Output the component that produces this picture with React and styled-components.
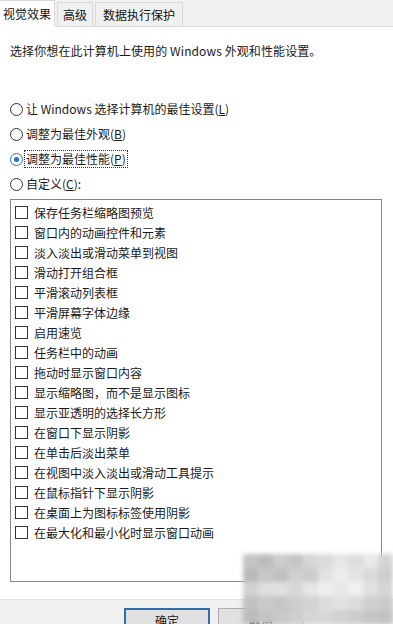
import styled, { createGlobalStyle } from 'styled-components'

const GlobalStyle = createGlobalStyle`
  html, body {
    margin: 0;
    padding: 0;
    background: #ffffff;
  }
  body {
    font-family: "Noto Sans CJK SC", "Noto Sans", "Liberation Sans", sans-serif;
    font-size: 12px;
    color: #1a1a1a;
  }
`

const Window = styled.div`
  position: relative;
  width: 393px;
  height: 624px;
  overflow: hidden;
  display: flex;
  flex-direction: column;
  background: #ffffff;
`

const TabStrip = styled.div`
  height: 27px;
  display: flex;
  align-items: flex-end;
  background: #f0f0f0;
  border-bottom: 1px solid #d9d9d9;
`

const Tab = styled.div`
  height: ${p => (p.active ? '27px' : '24px')};
  margin-bottom: ${p => (p.active ? '-1px' : '0')};
  margin-left: ${p => (p.active ? '0' : '2px')};
  padding: 0 ${p => p.pad || 6}px;
  display: flex;
  align-items: center;
  box-sizing: border-box;
  background: ${p => (p.active ? '#ffffff' : '#f0f0f0')};
  border: 1px solid #d9d9d9;
  border-bottom: ${p => (p.active ? '1px solid #ffffff' : 'none')};
  border-left: ${p => (p.active ? 'none' : '1px solid #d9d9d9')};
  font-size: 12px;
  line-height: 16px;
  color: #111;
`

const Page = styled.div`
  flex: 1;
  display: flex;
  flex-direction: column;
  padding: 0 11px 0 10px;
  background: #ffffff;
`

const Desc = styled.div`
  margin-top: 16px;
  line-height: 16px;
  font-size: 12px;
  letter-spacing: 0.1px;
`

const RadioGroup = styled.div`
  margin-top: 42px;
  display: flex;
  flex-direction: column;
  gap: 9px;
`

const RadioRow = styled.label`
  display: flex;
  align-items: center;
  height: 16px;
  gap: 2px;
`

const RadioCircle = styled.span`
  width: 11px;
  height: 11px;
  border-radius: 50%;
  border: 1px solid ${p => (p.checked ? '#1e73c8' : '#333')};
  background: #fff;
  display: flex;
  align-items: center;
  justify-content: center;
  flex-shrink: 0;
  &::after {
    content: '';
    width: 5px;
    height: 5px;
    border-radius: 50%;
    background: ${p => (p.checked ? '#1e73c8' : 'transparent')};
  }
`

const RadioText = styled.span`
  line-height: 16px;
  padding: 0 1px;
  outline: ${p => (p.focus ? '1px dotted #333' : 'none')};
`

const Key = styled.span`
  text-decoration: underline;
  text-underline-offset: 1px;
`

const ListBox = styled.div`
  margin-top: 7px;
  height: 383px;
  box-sizing: border-box;
  border: 1px solid #828790;
  padding: 2px 0 0 4px;
  display: flex;
  flex-direction: column;
`

const CheckRow = styled.label`
  height: 20px;
  display: flex;
  align-items: center;
  gap: 6px;
`

const CheckBox = styled.span`
  width: 11px;
  height: 11px;
  border: 1px solid #333;
  background: #fff;
  flex-shrink: 0;
`

const Footer = styled.div`
  margin-top: 17px;
  height: 22px;
  background: #f0f0f0;
  border-top: 1px solid #e3e3e3;
  display: flex;
  align-items: flex-start;
  padding: 8px 0 0 124px;
  gap: 8px;
`

const Button = styled.div`
  width: 86px;
  height: 24px;
  box-sizing: border-box;
  border: ${p => (p.primary ? '2px solid #2f6fa6' : '1px solid #adadad')};
  background: #e1e1e1;
  display: flex;
  justify-content: center;
  padding-top: 3px;
  font-size: 12px;
  line-height: 16px;
`

const Watermark = styled.div`
  position: absolute;
  right: 0;
  bottom: 0;
  width: 150px;
  height: 70px;
  display: grid;
  grid-template-columns: repeat(10, 1fr);
  grid-template-rows: repeat(5, 1fr);
  filter: blur(2px);
`

const Pixel = styled.span`
  display: block;
`

const shades = [
  '#c4c4c4', '#bdbdbd', '#cdcdcd', '#c6c6c6', '#d6d6d6', '#dcdcdc', '#e6e6e6', '#dedede', '#e9e9e9', '#d4d4d4',
  '#bababa', '#c8c8c8', '#c0c0c0', '#d0d0d0', '#cccccc', '#e2e2e2', '#ececec', '#e4e4e4', '#dadada', '#cfcfcf',
  '#d2d2d2', '#dedede', '#e0e0e0', '#d8d8d8', '#e6e6e6', '#eeeeee', '#e8e8e8', '#f0f0f0', '#e0e0e0', '#d6d6d6',
  '#c2c2c2', '#cacaca', '#c6c6c6', '#cdcdcd', '#d4d4d4', '#dcdcdc', '#e2e2e2', '#dcdcdc', '#d0d0d0', '#cbcbcb',
  '#bcbcbc', '#c4c4c4', '#c9c9c9', '#cfcfcf', '#d6d6d6', '#d8d8d8', '#d2d2d2', '#cccccc', '#c6c6c6', '#c2c2c2',
]

const options = [
  ['让 Windows 选择计算机的最佳设置(', 'L', ')'],
  ['调整为最佳外观(', 'B', ')'],
  ['调整为最佳性能(', 'P', ')'],
  ['自定义(', 'C', '):'],
]

const effects = [
  '保存任务栏缩略图预览',
  '窗口内的动画控件和元素',
  '淡入淡出或滑动菜单到视图',
  '滑动打开组合框',
  '平滑滚动列表框',
  '平滑屏幕字体边缘',
  '启用速览',
  '任务栏中的动画',
  '拖动时显示窗口内容',
  '显示缩略图，而不是显示图标',
  '显示亚透明的选择长方形',
  '在窗口下显示阴影',
  '在单击后淡出菜单',
  '在视图中淡入淡出或滑动工具提示',
  '在鼠标指针下显示阴影',
  '在桌面上为图标标签使用阴影',
  '在最大化和最小化时显示窗口动画',
]

export default function App() {
  return (
    <>
      <GlobalStyle />
      <Window>
        <TabStrip>
          <Tab active pad={3}>视觉效果</Tab>
          <Tab pad={5}>高级</Tab>
          <Tab pad={7}>数据执行保护</Tab>
        </TabStrip>
        <Page>
          <Desc>选择你想在此计算机上使用的 Windows 外观和性能设置。</Desc>
          <RadioGroup>
            {options.map(([a, k, b], i) => (
              <RadioRow key={a}>
                <RadioCircle checked={i === 2} />
                <RadioText focus={i === 2}>
                  {a}<Key>{k}</Key>{b}
                </RadioText>
              </RadioRow>
            ))}
          </RadioGroup>
          <ListBox>
            {effects.map(e => (
              <CheckRow key={e}>
                <CheckBox />
                <span>{e}</span>
              </CheckRow>
            ))}
          </ListBox>
        </Page>
        <Footer>
          <Button primary>确定</Button>
          <Button>取消</Button>
        </Footer>
        <Watermark>
          {shades.map((c, i) => (
            <Pixel key={i} style={{ background: c }} />
          ))}
        </Watermark>
      </Window>
    </>
  )
}
